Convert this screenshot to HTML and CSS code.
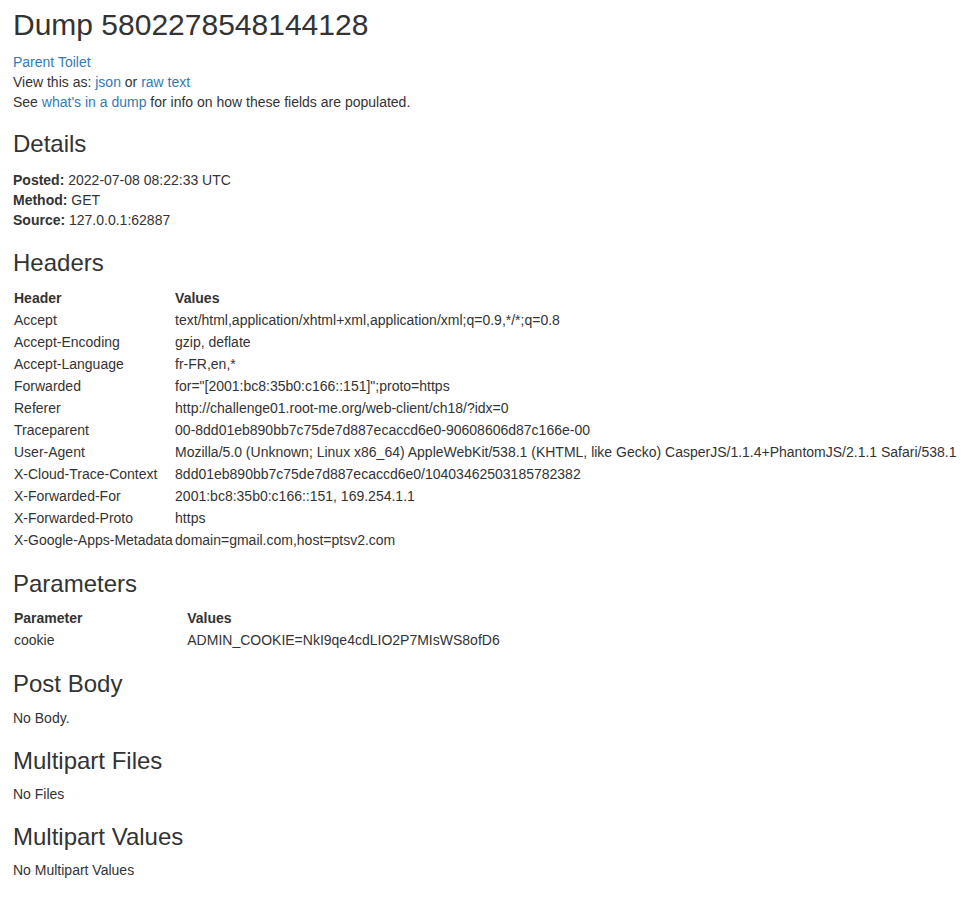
FILE: index.html
```html
<!DOCTYPE html>
<html>
<head>
<meta charset="utf-8">
<title>Dump 5802278548144128</title>
<link rel="stylesheet" href="styles.css">
</head>
<body>
<div class="container">
  <h2 class="title">Dump 5802278548144128</h2>
  <p class="intro">
    <a href="#">Parent Toilet</a><br>
    View this as: <a href="#">json</a> or <a href="#">raw text</a><br>
    See <a href="#">what's in a dump</a> for info on how these fields are populated.
  </p>

  <h3 class="first">Details</h3>
  <div class="details">
    <div><strong>Posted:</strong> 2022-07-08 08:22:33 UTC</div>
    <div><strong>Method:</strong> GET</div>
    <div><strong>Source:</strong> 127.0.0.1:62887</div>
  </div>

  <h3>Headers</h3>
  <table class="kv">
    <thead><tr><th>Header</th><th>Values</th></tr></thead>
    <tbody>
      <tr><td>Accept</td><td>text/html,application/xhtml+xml,application/xml;q=0.9,*/*;q=0.8</td></tr>
      <tr><td>Accept-Encoding</td><td>gzip, deflate</td></tr>
      <tr><td>Accept-Language</td><td>fr-FR,en,*</td></tr>
      <tr><td>Forwarded</td><td>for="[2001:bc8:35b0:c166::151]";proto=https</td></tr>
      <tr><td>Referer</td><td>http://challenge01.root-me.org/web-client/ch18/?idx=0</td></tr>
      <tr><td>Traceparent</td><td>00-8dd01eb890bb7c75de7d887ecaccd6e0-90608606d87c166e-00</td></tr>
      <tr><td>User-Agent</td><td>Mozilla/5.0 (Unknown; Linux x86_64) AppleWebKit/538.1 (KHTML, like Gecko) CasperJS/1.1.4+PhantomJS/2.1.1 Safari/538.1</td></tr>
      <tr><td>X-Cloud-Trace-Context</td><td>8dd01eb890bb7c75de7d887ecaccd6e0/10403462503185782382</td></tr>
      <tr><td>X-Forwarded-For</td><td>2001:bc8:35b0:c166::151, 169.254.1.1</td></tr>
      <tr><td>X-Forwarded-Proto</td><td>https</td></tr>
      <tr><td>X-Google-Apps-Metadata</td><td>domain=gmail.com,host=ptsv2.com</td></tr>
    </tbody>
  </table>

  <h3>Parameters</h3>
  <table class="kv">
    <thead><tr><th>Parameter</th><th>Values</th></tr></thead>
    <tbody>
      <tr><td>cookie</td><td>ADMIN_COOKIE=NkI9qe4cdLIO2P7MIsWS8ofD6</td></tr>
    </tbody>
  </table>

  <h3>Post Body</h3>
  <p>No Body.</p>

  <h3>Multipart Files</h3>
  <p>No Files</p>

  <h3>Multipart Values</h3>
  <p>No Multipart Values</p>
</div>
</body>
</html>
```

FILE: styles.css
```css
html, body {
  margin: 0;
  padding: 0;
}
body {
  font-family: "Liberation Sans", Arial, Helvetica, sans-serif;
  font-size: 14px;
  line-height: 20px;
  color: #333333;
  background: #ffffff;
}
.container {
  padding: 8px 13px 20px 13px;
}
a {
  color: #337ab7;
  text-decoration: none;
}
h2, h3 {
  font-weight: normal;
  line-height: 1.1;
  color: #333333;
}
h2.title {
  font-size: 30px;
  margin: 0 0 11px 0;
}
h3 {
  font-size: 24px;
  margin: 20px 0 10px 0;
}
h3.first {
  margin-top: 19px;
}
p {
  margin: 0 0 10px 0;
}
strong, th {
  font-weight: bold;
}
.details {
  margin: 0;
  padding-top: 3px;
}
table.kv {
  width: 100%;
  border-collapse: collapse;
  border-spacing: 0;
}
table.kv th, table.kv td {
  padding: 1px;
  text-align: left;
  vertical-align: top;
  white-space: nowrap;
}
```
